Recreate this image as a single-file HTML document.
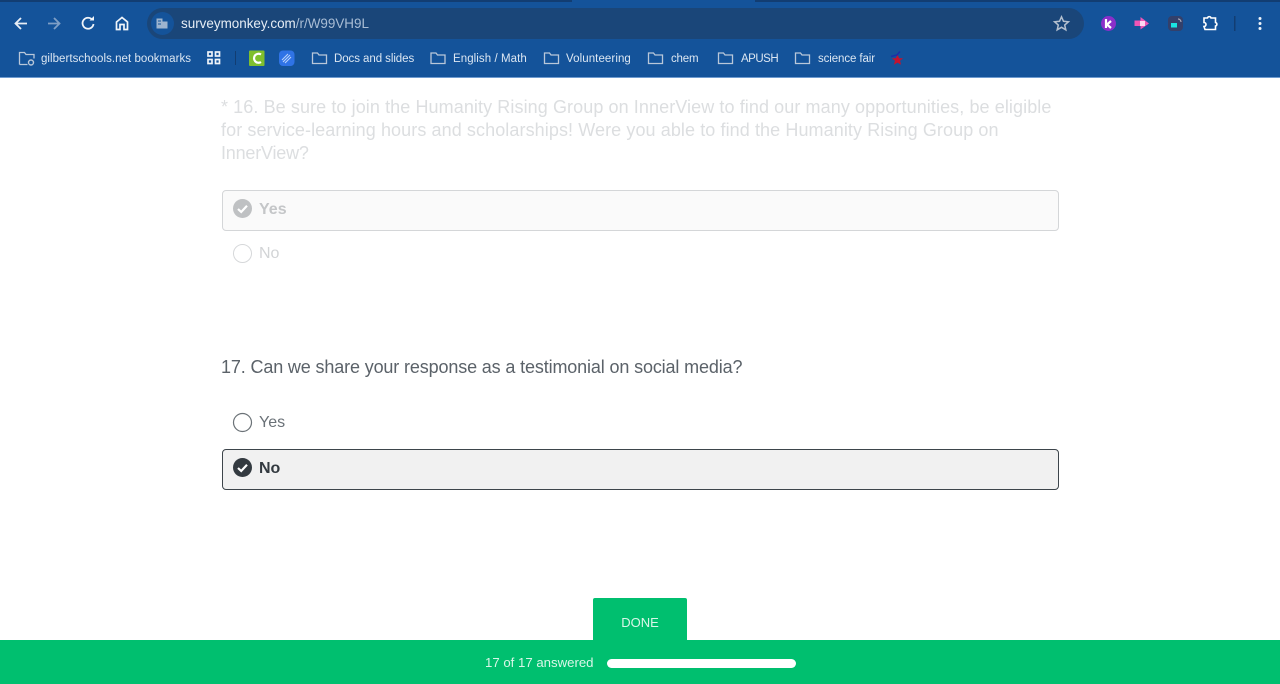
<!DOCTYPE html>
<html>
<head>
<meta charset="utf-8">
<style>
html,body{margin:0;padding:0;width:1280px;height:684px;overflow:hidden;background:#fff;font-family:"Liberation Sans",sans-serif}
.a{position:absolute;white-space:nowrap}
.bm{font-size:11.5px;color:#dbe6f2;top:52px;line-height:14px}
.q{font-size:18px;line-height:23px;letter-spacing:.09px}
svg{position:absolute;overflow:visible}
</style>
</head>
<body>
<div class="a" style="left:0;top:0;width:1280px;height:78px;background:#14539a"></div>
<div class="a" style="left:0;top:77px;width:1280px;height:1px;background:#6e9bd0"></div>
<div class="a" style="left:0;top:0;width:572px;height:2px;background:#123d72"></div>
<div class="a" style="left:755px;top:0;width:525px;height:2px;background:#123d72"></div>
<div class="a" style="left:147px;top:8px;width:937px;height:31px;border-radius:16px;background:#1a4679"></div>
<div class="a" style="left:151px;top:12px;width:23px;height:23px;border-radius:12px;background:#14539a"></div>

<svg style="left:0;top:0" width="1280" height="78" fill="none">
<path d="M27 23.500H16M21 18l-5.500 5.500L21 29" stroke="#e8eef6" stroke-width="1.800"/>
<path d="M48 23.500h11M54 18l5.500 5.500L54 29" stroke="#7f9fc6" stroke-width="1.800"/>
<path d="M92.500 20a5.500 5.500 0 1 0 1 4" stroke="#f0f4f9" stroke-width="1.800"/>
<path d="M89.500 20.500h4.500V16z" fill="#f0f4f9"/>
<path d="M116.500 29.500v-7.500l5.500-4.500 5.500 4.500v7.500h-3.500v-5h-4v5z" stroke="#f0f4f9" stroke-width="1.700"/>
<path d="M156.500 18.500h6v10h-6zM162.500 21.500h5v7h-5z" fill="#9db4cf"/>
<path d="M158 21h3M158 24h3" stroke="#14539a"/>
<path d="M1061.500 16.800l2 4.500 4.900.5-3.700 3.200 1.100 4.800-4.300-2.500-4.300 2.500 1.100-4.800-3.700-3.200 4.900-.5z" stroke="#b4c0cf" stroke-width="1.500"/>

<circle cx="1108.500" cy="23.500" r="7.500" fill="#8a2fc9"/>
<path d="M1106 19v9M1111 21l-4 3.500 4 3.500" stroke="#fff" stroke-width="2.200"/>
<path d="M1134.500 20.500h6v-3.500l8.500 6.500-8.500 6v-3.500h-6z" fill="#ee55b5"/>
<rect x="1140" y="21" width="5" height="5" fill="#ffd6f0"/>
<rect x="1168" y="16" width="15" height="15" rx="4" fill="#33406b"/>
<rect x="1171" y="23" width="6" height="4.500" fill="#19e3e3"/>
<path d="M1178 19a3 3 0 0 1 3 3" stroke="#aab" stroke-width="1.200"/>
<path d="M1204 18h3.500a1.800 1.800 0 0 1 3.500 0h4.500v4.500a1.800 1.800 0 0 1 0 3.500v3.500h-10.500l-1-3a2 2 0 0 0 0-4z" stroke="#fff" stroke-width="1.600"/>
<rect x="1234" y="16" width="1.500" height="15" fill="#123d72"/>
<circle cx="1260" cy="18.500" r="1.500" fill="#eef3f8"/><circle cx="1260" cy="23.500" r="1.500" fill="#eef3f8"/><circle cx="1260" cy="28.500" r="1.500" fill="#eef3f8"/>

<path d="M19.500 64.500v-12h5l1.500 2h8v4M19.500 64.500h8" stroke="#b9c7d9" stroke-width="1.300"/>
<circle cx="31" cy="62.500" r="2.500" stroke="#b9c7d9" stroke-width="1.400"/>
<g fill="none" stroke="#eef3f8" stroke-width="1.700"><rect x="208" y="52" width="4" height="4"/><rect x="215.500" y="52" width="4" height="4"/><rect x="208" y="59.500" width="4" height="4"/><rect x="215.500" y="59.500" width="4" height="4"/></g>
<rect x="235" y="51" width="1" height="14" fill="#123d72"/>
<rect x="249" y="50.500" width="15.500" height="15.500" rx="1" fill="#7fbf2e"/>
<path d="M261 54.500a4.500 4.500 0 1 0 0 7.500" stroke="#fff" stroke-width="2.200"/>
<rect x="279" y="50.500" width="15.500" height="15.500" rx="4" fill="#2f73e6"/>
<path d="M282 60l6-6M283 62l7-7M285 63l6-6" stroke="#b7d2fa" stroke-width="1.100"/>
<g stroke="#b9c7d9" stroke-width="1.300">
<path d="M312.500 63.500v-10.500h5l1.500 2h7.500v8.500z"/>
<path d="M431 63.500v-10.500h5l1.500 2h7.500v8.500z"/>
<path d="M544.500 63.500v-10.500h5l1.500 2h7.500v8.500z"/>
<path d="M648.500 63.500v-10.500h5l1.500 2h7.500v8.500z"/>
<path d="M718.500 63.500v-10.500h5l1.500 2h7.500v8.500z"/>
<path d="M795.500 63.500v-10.500h5l1.500 2h7.500v8.500z"/>
</g>
<path d="M897.500 54.500l1.700 3.700h4l-3.200 2.600 1.100 4-3.600-2.200-3.600 2.200 1.100-4-3.200-2.600h4z" fill="#c4122f"/>
<path d="M891 56.500l6-1.500 3-3.500" stroke="#1b2fa8" stroke-width="1.500"/>
</svg>

<div class="a" style="left:181px;top:15px;font-size:13.450px;line-height:17px;color:#e6edf5">surveymonkey.com<span style="color:#a9bdd5">/r/W99VH9L</span></div>
<div class="a bm" style="left:41px;letter-spacing:.04px">gilbertschools.net bookmarks</div>
<div class="a bm" style="left:334px;letter-spacing:-.07px">Docs and slides</div>
<div class="a bm" style="left:453px;letter-spacing:.07px">English / Math</div>
<div class="a bm" style="left:566px;letter-spacing:.08px">Volunteering</div>
<div class="a bm" style="left:671px;letter-spacing:-.2px">chem</div>
<div class="a bm" style="left:741px;letter-spacing:-.5px">APUSH</div>
<div class="a bm" style="left:818px;letter-spacing:-.1px">science fair</div>

<div class="a q" style="left:221px;top:96px;color:#dcdee0">* 16. Be sure to join the Humanity Rising Group on InnerView to find our many opportunities, be eligible</div>
<div class="a q" style="left:221px;top:119px;color:#dcdee0">for service-learning hours and scholarships! Were you able to find the Humanity Rising Group on</div>
<div class="a q" style="left:221px;top:142px;color:#dcdee0;letter-spacing:-.2px">InnerView?</div>

<div class="a" style="left:222px;top:190px;width:835px;height:39px;background:#fafafa;border:1px solid #d4d6d8;border-radius:4px"></div>
<svg style="left:233px;top:199px" width="20" height="20"><circle cx="9.500" cy="9.500" r="9.500" fill="#bfc1c3"/><path d="M5 10l3.200 3L14 6.800" stroke="#fff" stroke-width="2.200" fill="none"/></svg>
<div class="a" style="left:259px;top:200px;font-size:16px;line-height:19px;font-weight:bold;color:#c4c6c8">Yes</div>
<svg style="left:233px;top:244px" width="20" height="20"><circle cx="9.500" cy="9.500" r="9" fill="#fff" stroke="#d6d8da"/></svg>
<div class="a" style="left:259px;top:244px;font-size:16px;line-height:19px;color:#d2d4d6">No</div>

<div class="a q" style="left:221px;top:356px;color:#5b6269;letter-spacing:-.14px">17. Can we share your response as a testimonial on social media?</div>
<svg style="left:233px;top:413px" width="20" height="20"><circle cx="9.500" cy="9.500" r="9" fill="#fff" stroke="#6b7277" stroke-width="1.200"/></svg>
<div class="a" style="left:259px;top:413px;font-size:16px;line-height:19px;color:#6a7177">Yes</div>
<div class="a" style="left:222px;top:449px;width:835px;height:39px;background:#f1f1f1;border:1px solid #3d454b;border-radius:4px"></div>
<svg style="left:233px;top:458px" width="20" height="20"><circle cx="9.500" cy="9.500" r="9.500" fill="#333a40"/><path d="M5 10l3.200 3L14 6.800" stroke="#fff" stroke-width="2.200" fill="none"/></svg>
<div class="a" style="left:259px;top:459px;font-size:16px;line-height:19px;font-weight:bold;color:#333a40">No</div>

<div class="a" style="left:593px;top:598px;width:94px;height:42px;background:#00bf6f;border-radius:2px 2px 0 0"></div>
<div class="a" style="left:593px;top:614px;width:94px;text-align:center;font-size:13px;line-height:17px;color:#d9f6e8">DONE</div>
<div class="a" style="left:0;top:640px;width:1280px;height:44px;background:#00bf6f"></div>
<div class="a" style="left:485px;top:654px;font-size:13.200px;line-height:17px;color:#d9f6e8">17 of 17 answered</div>
<div class="a" style="left:607px;top:659px;width:189px;height:9px;border-radius:5px;background:#fff"></div>
</body>
</html>
